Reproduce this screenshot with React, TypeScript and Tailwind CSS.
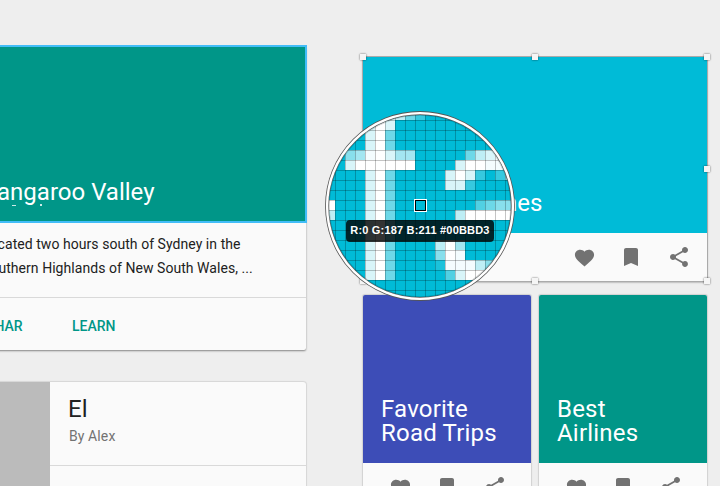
import React from "react";

type IconProps = { className?: string };

const Heart = ({ className = "" }: IconProps) => (
  <svg viewBox="0 0 24 24" preserveAspectRatio="none" className={`h-[22px] w-[23px] fill-[#727272] ${className}`}>
    <path d="M12 21.35l-1.45-1.32C5.4 15.36 2 12.28 2 8.5 2 5.42 4.42 3 7.5 3c1.74 0 3.41.81 4.5 2.09C13.09 3.81 14.76 3 16.5 3 19.58 3 22 5.42 22 8.5c0 3.78-3.4 6.86-8.55 11.54L12 21.35z" />
  </svg>
);

const Bookmark = () => (
  <svg viewBox="0 0 24 24" className="size-6 fill-[#727272]">
    <path d="M17 3H7c-1.1 0-2 .9-2 2v16l7-3 7 3V5c0-1.1-.9-2-2-2z" />
  </svg>
);

const Share = () => (
  <svg viewBox="0 0 24 24" className="size-6 fill-[#727272]">
    <path d="M18 16.08c-.76 0-1.44.3-1.96.77L8.91 12.7c.05-.23.09-.46.09-.7s-.04-.47-.09-.7l7.05-4.11c.54.5 1.25.81 2.04.81 1.66 0 3-1.34 3-3s-1.34-3-3-3-3 1.34-3 3c0 .24.04.47.09.7L8.04 9.81C7.5 9.31 6.79 9 6 9c-1.66 0-3 1.34-3 3s1.34 3 3 3c.79 0 1.5-.31 2.04-.81l7.12 4.16c-.05.21-.08.43-.08.65 0 1.61 1.31 2.92 2.92 2.92s2.92-1.31 2.92-2.92-1.31-2.92-2.92-2.92z" />
  </svg>
);

const Actions = ({ className = "" }: IconProps) => (
  <div className={`flex items-center justify-end gap-6 ${className}`}>
    <Heart className="-mr-px mt-[2px]" />
    <Bookmark />
    <Share />
  </div>
);

// Whiteness of each magnified pixel: "." is plain cyan, "F" is pure white.
const PIXELS = [
  "....8F8742..........",
  "....8F8.............",
  "....8F4.............",
  "....8F4.............",
  "..569F866.....4789..",
  "..8FFFFFF....8FF99..",
  "....8F4.....8F82.25.",
  "....8F4.....882.....",
  "....8F4.............",
  "F...8F4........3455.",
  "7...8F4......7FFFFF.",
  "....8F4.............",
  "....8F4.............",
  "....8F4....7F6......",
  "....8F4....5F9......",
  "....8F4....199975...",
  "....8F4.....38FFFF..",
  "....................",
  "....................",
];

const Lens = () => (
  <div className="absolute left-[325px] top-[111px] h-[190px] w-[190px]">
    <svg viewBox="325 111 190 190" className="h-full w-full">
      <defs>
        <clipPath id="lens">
          <circle cx="420" cy="206" r="91.5" />
        </clipPath>
      </defs>
      <g clipPath="url(#lens)">
        <rect x="325" y="110" width="190" height="191" fill="#00bbd7" />
        {PIXELS.map((row, r) =>
          row.split("").map((c, i) =>
            c === "." ? null : (
              <rect
                key={`${r}-${i}`}
                x={325 + i * 10}
                y={110 + r * 10}
                width="10"
                height="10"
                fill="#fff"
                fillOpacity={c === "F" ? 1 : Number(c) / 9.4}
              />
            )
          )
        )}
        {Array.from({ length: 20 }, (_, i) => (
          <g key={i} fill="#000" fillOpacity="0.23">
            <rect x={325 + i * 10} y="110" width="1" height="192" />
            <rect x="325" y={110 + i * 10} width="190" height="1" />
          </g>
        ))}
      </g>
      <circle cx="420" cy="206" r="91.2" fill="none" stroke="#000" strokeOpacity=".18" strokeWidth="2" />
      <circle cx="420" cy="206" r="93" fill="none" stroke="#555" strokeWidth="3.8" />
      <circle cx="420" cy="206" r="92.9" fill="none" stroke="#fff" strokeWidth="2.4" />
      <rect x="414.5" y="199.5" width="12" height="12" fill="none" stroke="#fff" />
      <rect x="415.5" y="200.5" width="10" height="10" fill="none" stroke="#000" />
    </svg>
    <div className="absolute left-[21px] top-[109px] flex h-[22px] w-[148px] items-center justify-center whitespace-nowrap rounded bg-black/80 pb-px font-['Liberation_Sans',sans-serif] text-[11px] font-bold tracking-[0.18px] text-white">
      R:0 G:187 B:211 #00BBD3
    </div>
  </div>
);

const HANDLES = [
  "left-[-3px] top-[-3px]",
  "left-[169px] top-[-3px]",
  "left-[341px] top-[-3px]",
  "left-[341px] top-[109px]",
  "left-[341px] top-[221px]",
  "left-[169px] top-[221px]",
  "left-[-3px] top-[221px]",
];

const Tile = ({ color, title }: { color: string; title: string }) => (
  <div className="h-[240px] w-[168px] overflow-hidden rounded-[2px] bg-[#fafafa] shadow-[0_0_1px_1px_rgba(0,0,0,0.12)]">
    <div className={`flex h-[168px] flex-col justify-end px-[18px] pb-[18px] text-2xl leading-6 tracking-[0.2px] whitespace-pre-line text-white ${color}`}>
      {title}
    </div>
    <Actions className="h-[48px] pr-6" />
  </div>
);

export default function App() {
  return (
    <div className="relative flex h-[486px] w-[720px] overflow-hidden bg-[#eeeeee] font-[Roboto,sans-serif]">
      <div className="-ml-9 w-[342px] shrink-0 pt-[46px]">
        <section className="h-[304px] rounded-[2px] bg-[#fafafa] shadow-[0_1px_2px_rgba(0,0,0,0.45)]">
          <div className="flex h-[176px] flex-col justify-end bg-[#009688] px-[18px] pb-[15px] text-2xl leading-6 text-white outline-2 outline-[#42bdf8] -outline-offset-1">
            <div>Kangaroo Valley</div>
            <div className="flex h-[3px] items-start pl-[30px]">
              <span className="mt-px h-px w-1 bg-white/80" />
              <span className="ml-6 h-[2px] w-[2px] bg-white/80" />
            </div>
          </div>
          <div className="h-[76px] whitespace-nowrap border-b border-[#d9d9d9] px-[18px] pt-[10px] text-sm leading-6 tracking-[0.05px] text-[#212121]">
            <div>Located two hours south of Sydney in the</div>
            <div>Southern Highlands of New South Wales, ...</div>
          </div>
          <div className="flex h-[54px] items-center pl-[22px] pt-[2px] text-sm font-medium text-[#009688]">
            <span className="w-[86px]">SHAR</span>
            <span>LEARN</span>
          </div>
        </section>
        <section className="mt-8 flex h-[120px] overflow-hidden rounded-[3px] bg-[#fafafa] shadow-[0_0_1px_1px_rgba(0,0,0,0.1)]">
          <div className="w-[86px] bg-[#bbbbbb]" />
          <div className="flex-1">
            <div className="h-[84px] border-b border-[#d9d9d9] pl-[18px] pt-[15px]">
              <div className="text-2xl leading-6 text-[#212121]">El</div>
              <div className="mt-[5px] pl-px text-sm leading-5 tracking-[0.1px] text-[#727272]">By Alex</div>
            </div>
          </div>
        </section>
      </div>
      <div className="ml-[57px] w-[344px] shrink-0 pt-[57px]">
        <section className="relative h-[224px] bg-[#fafafa] shadow-[0_1px_2px_rgba(0,0,0,0.5)] outline outline-[#aaaaaa]">
          <div className="flex h-[176px] items-end bg-[#00bbd7] pb-[18px] pl-[141px] text-2xl leading-6 text-white">nes</div>
          <Actions className="h-[48px] pr-4" />
          {HANDLES.map((h) => (
            <span key={h} className={`absolute size-[6px] bg-[#f5f5f5] shadow-[0_0_2px_rgba(0,0,0,0.7)] ${h}`} />
          ))}
        </section>
        <div className="mt-[14px] flex gap-2">
          <Tile color="bg-[#3d4db7]" title={"Favorite\nRoad Trips"} />
          <Tile color="bg-[#009688]" title={"Best\nAirlines"} />
        </div>
      </div>
      <Lens />
    </div>
  );
}
